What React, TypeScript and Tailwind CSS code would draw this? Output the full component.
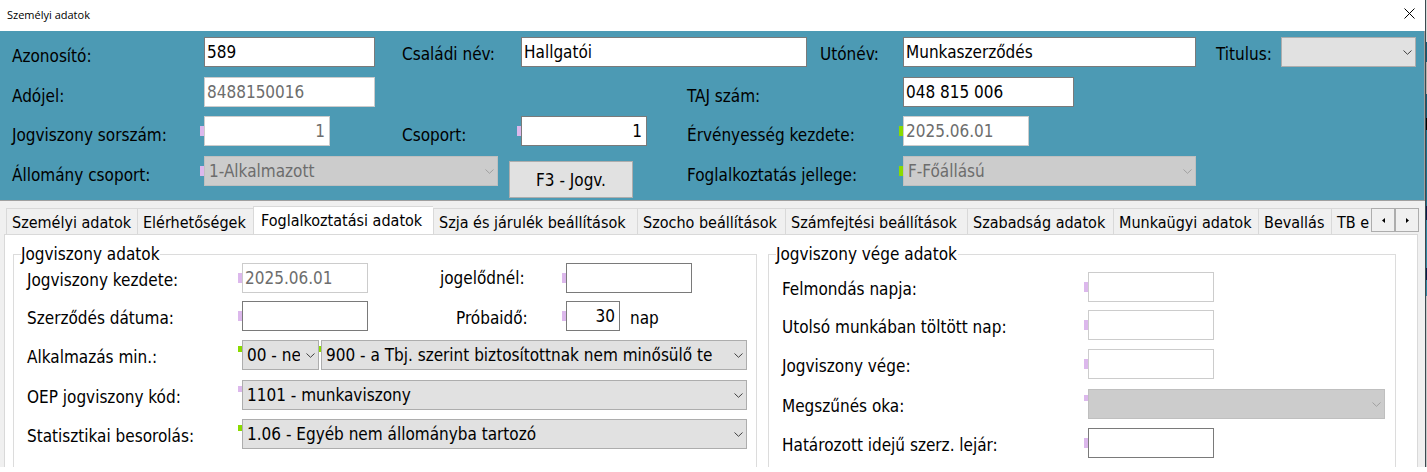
import React from "react";
import clsx from "clsx";

type Mark = "violet" | "green";

const Marker = ({ color, small }: { color: Mark; small?: boolean }) => (
  <span
    className={clsx(
      "absolute -left-1 w-1",
      small ? "top-1.5 h-1.5" : "top-2.5 h-2.5",
      color === "violet" ? "bg-[#dcb8ec]" : "bg-[#8adb00]"
    )}
  />
);

const Label = ({ htmlFor, className, children }) => (
  <label htmlFor={htmlFor} className={clsx("whitespace-nowrap leading-[30px]", className)}>
    {children}
  </label>
);

type FieldProps = {
  id: string;
  value?: string;
  disabled?: boolean;
  mark?: Mark;
  smallMark?: boolean;
  right?: boolean;
  className?: string;
};

const TextField = ({ id, value = "", disabled, mark, right, className }: FieldProps) => (
  <div className={clsx("relative h-[30px]", className)}>
    {mark && <Marker color={mark} />}
    <input
      id={id}
      type="text"
      defaultValue={value}
      disabled={disabled}
      className={clsx(
        "block h-full w-full border bg-white pl-0.5 pr-1 outline-none",
        disabled ? "border-[#cccccc] text-[#6d6d6d]" : "border-[#7a7a7a] text-black",
        right && "text-right"
      )}
    />
  </div>
);

const SelectField = ({ id, value = "", disabled, mark, smallMark, className }: FieldProps) => (
  <div className={clsx("relative h-[30px]", className)}>
    {mark && <Marker color={mark} small={smallMark} />}
    <select
      id={id}
      defaultValue={value}
      disabled={disabled}
      className={clsx(
        "relative block h-full w-full appearance-none overflow-hidden border pl-1 pr-[18px] pt-0.5 opacity-100 outline-none",
        disabled
          ? "border-[#bfbfbf] bg-[#cccccc] text-[#6d6d6d]"
          : "border-[#adadad] bg-[#e1e1e1] text-black"
      )}
    >
      <option value={value}>{value}</option>
    </select>
    <svg
      viewBox="0 0 9 5"
      className={clsx(
        "pointer-events-none absolute right-1 top-[13px] h-[5px] w-[9px]",
        disabled ? "text-[#a0a0a0]" : "text-[#404040]"
      )}
      fill="none"
      stroke="currentColor"
    >
      <path d="M0.5 0.5 L4.5 4.3 L8.5 0.5" />
    </svg>
  </div>
);

const tabs = [
  { title: "Személyi adatok", width: "w-[131px]" },
  { title: "Elérhetőségek", width: "w-[116px]" },
  { title: "Foglalkoztatási adatok", width: "w-[180px]", active: true },
  { title: "Szja és járulék beállítások", width: "w-[204px]" },
  { title: "Szocho beállítások", width: "w-[148px]" },
  { title: "Számfejtési beállítások", width: "w-[182px]" },
  { title: "Szabadság adatok", width: "w-[146px]" },
  { title: "Munkaügyi adatok", width: "w-[145px]" },
  { title: "Bevallás", width: "w-[73px]" },
  { title: "TB e", width: "flex-1" },
];

const TitleBar = () => (
  <header className="flex h-[31px] items-center justify-between bg-white pl-[7px] pr-2.5">
    <h1 className="pb-0.5 font-['Open_Sans',sans-serif] text-[11px] leading-4 text-black">Személyi adatok</h1>
    <button type="button" aria-label="Bezárás" className="-mt-1 text-black">
      <svg viewBox="0 0 11 11" className="h-[11px] w-[11px]" fill="none" stroke="currentColor">
        <path d="M0.5 0.5 L10.5 10.5 M10.5 0.5 L0.5 10.5" />
      </svg>
    </button>
  </header>
);

const PersonHeader = () => (
  <section className="grid grid-cols-[192px_minmax(0,198fr)_119px_minmax(0,166fr)_216px_minmax(0,293fr)_85px_135px] grid-rows-[40px_39px_40px_42px] items-start border-b border-r border-[#a0a0a0] bg-[#4c9ab4] pb-0.5 pl-3 pr-2 pt-1.5">
    <Label htmlFor="azonosito" className="pt-1">Azonosító:</Label>
    <TextField id="azonosito" value="589" className="w-[171px]" />
    <Label htmlFor="csaladi" className="pt-0.5">Családi név:</Label>
    <div className="col-span-2 flex">
      <TextField id="csaladi" value="Hallgatói" className="min-w-0 flex-1" />
      <Label htmlFor="utonev" className="w-24 pl-[13px] pt-0.5">Utónév:</Label>
    </div>
    <TextField id="utonev" value="Munkaszerződés" />
    <Label htmlFor="titulus" className="pl-5 pt-0.5">Titulus:</Label>
    <SelectField id="titulus" />

    <Label htmlFor="adojel" className="pt-1">Adójel:</Label>
    <TextField id="adojel" value="8488150016" disabled className="w-[171px]" />
    <Label htmlFor="taj" className="col-start-5 pt-1">TAJ szám:</Label>
    <TextField id="taj" value="048 815 006" className="w-[171px]" />

    <Label htmlFor="sorszam" className="col-start-1 pt-1">Jogviszony sorszám:</Label>
    <TextField id="sorszam" value="1" disabled right mark="violet" className="w-[126px]" />
    <Label htmlFor="csoport" className="pt-1">Csoport:</Label>
    <TextField id="csoport" value="1" right mark="violet" className="w-[126px]" />
    <Label htmlFor="ervenyes" className="pt-1">Érvényesség kezdete:</Label>
    <TextField id="ervenyes" value="2025.06.01" disabled mark="green" className="w-[126px]" />

    <Label htmlFor="allomany" className="col-start-1 pt-1">Állomány csoport:</Label>
    <div className="col-span-3 flex items-start gap-[11px]">
      <SelectField id="allomany" value="1-Alkalmazott" disabled mark="violet" className="w-[294px]" />
      <button type="button" className="mt-[5px] h-[37px] w-[124px] border border-[#adadad] bg-[#e1e1e1] pt-0.5 text-black">
        F3 - Jogv.
      </button>
    </div>
    <Label htmlFor="jelleg" className="pt-1">Foglalkoztatás jellege:</Label>
    <SelectField id="jelleg" value="F-Főállású" disabled mark="green" />
  </section>
);

const scrollButton =
  "flex size-6 items-center justify-center border border-[#adadad] bg-[#f0f0f0] text-black";

const TabStrip = () => (
  <div className="flex items-start pl-1.5 pr-1.5 pt-[5px]">
    <nav role="tablist" className="flex min-w-0 flex-1 items-end overflow-hidden text-[16px]">
      {tabs.map((tab) => (
        <button
          key={tab.title}
          type="button"
          role="tab"
          aria-selected={!!tab.active}
          className={clsx(
            "shrink-0 whitespace-nowrap border-l border-t border-[#d9d9d9] text-left",
            tab.width,
            tab.active ? "h-7 bg-white pl-[7px]" : "h-[26px] bg-[#f0f0f0] pl-[5px] pt-0.5"
          )}
        >
          {tab.title}
        </button>
      ))}
    </nav>
    <div className="mt-0.5 flex">
      <button type="button" aria-label="Előző fülek" className={scrollButton}>
        <svg viewBox="0 0 3 5" className="h-[5px] w-[3px]" fill="currentColor">
          <path d="M3 0 L0 2.5 L3 5 Z" />
        </svg>
      </button>
      <button type="button" aria-label="Következő fülek" className={scrollButton}>
        <svg viewBox="0 0 3 5" className="h-[5px] w-[3px]" fill="currentColor">
          <path d="M0 0 L3 2.5 L0 5 Z" />
        </svg>
      </button>
    </div>
  </div>
);

const group = "min-w-0 border border-b-0 border-[#dcdcdc] pl-[13px]";
const legend = "-ml-1.5 pr-px leading-[18px]";

const EmploymentStart = () => (
  <fieldset className={clsx(group, "pr-[9px]")}>
    <legend className={legend}>Jogviszony adatok</legend>
    <div className="grid grid-cols-[215px_minmax(0,198fr)_126px_minmax(0,181fr)] grid-rows-[38px_39px_40px_39px_30px] items-start">
      <Label htmlFor="kezdete" className="pt-0.5">Jogviszony kezdete:</Label>
      <TextField id="kezdete" value="2025.06.01" disabled mark="violet" className="w-[126px]" />
      <Label htmlFor="jogelod">jogelődnél:</Label>
      <TextField id="jogelod" mark="violet" className="w-[126px]" />

      <Label htmlFor="szerzodes" className="pt-0.5">Szerződés dátuma:</Label>
      <TextField id="szerzodes" mark="violet" className="w-[126px]" />
      <Label htmlFor="probaido" className="pl-4 pt-0.5">Próbaidő:</Label>
      <div className="flex gap-2.5">
        <TextField id="probaido" value="30" right mark="violet" className="w-[54px]" />
        <span className="pt-0.5 leading-[30px]">nap</span>
      </div>

      <Label htmlFor="alkalmazas" className="pt-0.5">Alkalmazás min.:</Label>
      <div className="col-span-3 flex gap-0.5">
        <SelectField id="alkalmazas" value="00 - nem" mark="green" smallMark className="z-10 w-[77px]" />
        <SelectField
          id="alkalmazas2"
          value="900 - a Tbj. szerint biztosítottnak nem minősülő te"
          mark="green"
          smallMark
          className="min-w-0 flex-1"
        />
      </div>

      <Label htmlFor="oep" className="pt-0.5">OEP jogviszony kód:</Label>
      <SelectField id="oep" value="1101 - munkaviszony" mark="violet" smallMark className="col-span-3" />

      <Label htmlFor="statisztika" className="pt-0.5">Statisztikai besorolás:</Label>
      <SelectField
        id="statisztika"
        value="1.06 - Egyéb nem állományba tartozó"
        mark="green"
        smallMark
        className="col-span-3"
      />
    </div>
  </fieldset>
);

const EmploymentEnd = () => (
  <fieldset className={clsx(group, "pb-[9px] pr-2.5")}>
    <legend className={legend}>Jogviszony vége adatok</legend>
    <div className="grid grid-cols-[306px_minmax(0,1fr)] grid-rows-[38px_39px_40px_39px_30px] items-start pt-[9px]">
      <Label htmlFor="felmondas" className="pt-0.5">Felmondás napja:</Label>
      <TextField id="felmondas" disabled mark="violet" className="w-[126px]" />
      <Label htmlFor="utolso" className="pt-0.5">Utolsó munkában töltött nap:</Label>
      <TextField id="utolso" disabled mark="violet" className="w-[126px]" />
      <Label htmlFor="vege" className="pt-0.5">Jogviszony vége:</Label>
      <TextField id="vege" disabled mark="violet" className="w-[126px]" />
      <Label htmlFor="megszunes" className="pt-0.5">Megszűnés oka:</Label>
      <SelectField id="megszunes" disabled mark="violet" smallMark />
      <Label htmlFor="hatarozott" className="pt-0.5">Határozott idejű szerz. lejár:</Label>
      <TextField id="hatarozott" mark="violet" className="w-[126px]" />
    </div>
  </fieldset>
);

// Sliver of the main window that stays visible behind the dialog
const BackWindow = () => (
  <div className="flex w-0.5 flex-col border-l border-[#3c4a50] bg-[#2f86a3]">
    <div className="h-[42px] bg-[#d8d8d8]" />
    <div className="h-5 bg-[#155a75]" />
    <div className="h-8 bg-[#b5b0ac]" />
    <div className="h-6 bg-[#155a75]" />
    <div className="h-3 bg-black" />
    <div className="h-[76px] bg-[#1f6f8c]" />
    <div className="h-3.5 bg-[#0a1c4a]" />
    <div className="h-12 bg-[#2f86a3]" />
    <div className="h-3 bg-[#0a1c4a]" />
    <div className="h-4 bg-[#2f86a3]" />
    <div className="flex-1 bg-[#c8c8c8]" />
  </div>
);

const App = () => {
  return (
    <div className="min-h-screen bg-white font-['DejaVu_Sans_Condensed','DejaVu_Sans',sans-serif] text-[17px] text-black">
      <div className="flex">
        <main className="min-w-0 flex-1 bg-[#f0f0f0]">
          <TitleBar />
          <PersonHeader />
          <TabStrip />
          <div className="ml-1 mr-[7px] grid grid-cols-[744fr_628fr] gap-[11px] border border-b-0 border-[#d9d9d9] bg-white pl-2 pr-[21px] pt-2.5">
            <EmploymentStart />
            <EmploymentEnd />
          </div>
        </main>
        <BackWindow />
      </div>
    </div>
  );
};

export default App;
